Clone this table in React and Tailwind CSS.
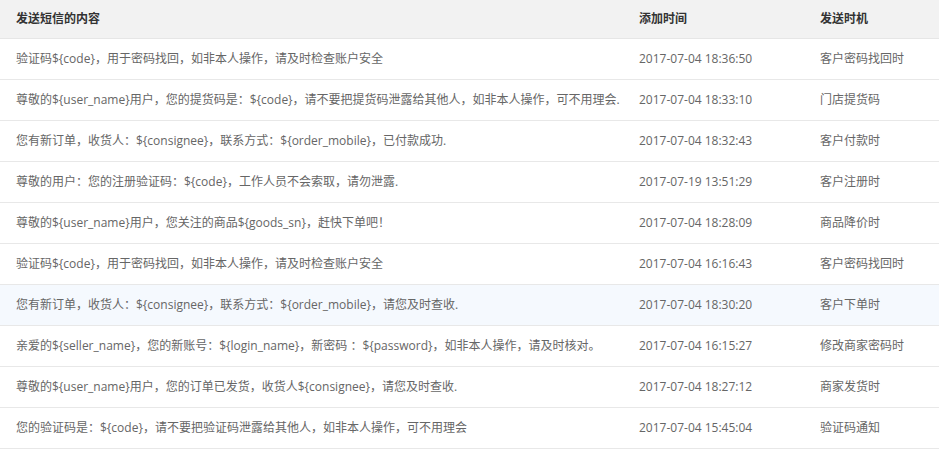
import React from "react";

const rows = [
  ["验证码${code}，用于密码找回，如非本人操作，请及时检查账户安全", "2017-07-04 18:36:50", "客户密码找回时"],
  ["尊敬的${user_name}用户，您的提货码是：${code}，请不要把提货码泄露给其他人，如非本人操作，可不用理会.", "2017-07-04 18:33:10", "门店提货码"],
  ["您有新订单，收货人：${consignee}，联系方式：${order_mobile}，已付款成功.", "2017-07-04 18:32:43", "客户付款时"],
  ["尊敬的用户：您的注册验证码：${code}，工作人员不会索取，请勿泄露.", "2017-07-19 13:51:29", "客户注册时"],
  ["尊敬的${user_name}用户，您关注的商品${goods_sn}，赶快下单吧！", "2017-07-04 18:28:09", "商品降价时"],
  ["验证码${code}，用于密码找回，如非本人操作，请及时检查账户安全", "2017-07-04 16:16:43", "客户密码找回时"],
  ["您有新订单，收货人：${consignee}，联系方式：${order_mobile}，请您及时查收.", "2017-07-04 18:30:20", "客户下单时"],
  ["亲爱的${seller_name}，您的新账号：${login_name}，新密码 ：${password}，如非本人操作，请及时核对。", "2017-07-04 16:15:27", "修改商家密码时"],
  ["尊敬的${user_name}用户，您的订单已发货，收货人${consignee}，请您及时查收.", "2017-07-04 18:27:12", "商家发货时"],
  ["您的验证码是：${code}，请不要把验证码泄露给其他人，如非本人操作，可不用理会", "2017-07-04 15:45:04", "验证码通知"],
];

export default function App() {
  return (
    <div className="w-[939px] bg-white font-['Open_Sans','Noto_Sans_CJK_SC',sans-serif] text-[12px]">
      <table className="w-full border-collapse">
        <thead>
          <tr className="h-[38px] bg-[#f2f2f2] border-b border-[#e6e6e6]">
            <th className="w-[623px] pl-4 text-left font-bold text-[#333]">发送短信的内容</th>
            <th className="w-[181px] pl-4 text-left font-bold text-[#333]">添加时间</th>
            <th className="pl-4 text-left font-bold text-[#333]">发送时机</th>
          </tr>
        </thead>
        <tbody>
          {rows.map((r, i) => (
            <tr
              key={i}
              className={`h-[41px] border-b border-[#e8e8e8] text-[#666] ${i === 6 ? "bg-[#f5f9fe]" : "bg-white"}`}
            >
              <td className="pl-4">{r[0]}</td>
              <td className="pl-4">{r[1]}</td>
              <td className="pl-4">{r[2]}</td>
            </tr>
          ))}
        </tbody>
      </table>
    </div>
  );
}
